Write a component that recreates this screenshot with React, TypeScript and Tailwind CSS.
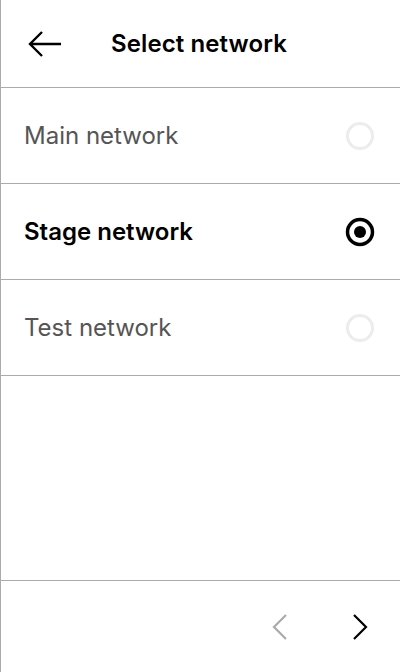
import React from "react";

const font = { fontFamily: "Inter, 'Noto Sans', sans-serif" };

function Radio({ selected }: { selected: boolean }) {
  return (
    <svg width="30" height="30" viewBox="0 0 30 30">
      {selected ? (
        <>
          <circle cx="15" cy="15" r="12.5" fill="none" stroke="#000" strokeWidth="3.5" />
          <circle cx="15" cy="15" r="6" fill="#000" />
        </>
      ) : (
        <circle cx="15" cy="15" r="12.5" fill="none" stroke="#ececec" strokeWidth="3" />
      )}
    </svg>
  );
}

const items = [
  { name: "Main network", selected: false },
  { name: "Stage network", selected: true },
  { name: "Test network", selected: false },
];

export default function App() {
  return (
    <div
      className="w-[400px] h-[672px] bg-white border-l border-[#ababab] flex flex-col overflow-hidden"
      style={font}
    >
      <div className="h-[88px] shrink-0 border-b border-[#ababab] flex items-center pl-[27px]">
        <svg width="34" height="28" viewBox="0 0 34 28" className="shrink-0">
          <path d="M2 14 H33 M14 2 L2 14 L14 26" fill="none" stroke="#000" strokeWidth="2.4" />
        </svg>
        <span className="ml-[49px] text-[24px] font-semibold text-black leading-none tracking-[0.1px]">
          Select network
        </span>
      </div>
      {items.map((it) => (
        <div
          key={it.name}
          className="h-[96px] shrink-0 border-b border-[#ababab] flex items-center justify-between pl-[23px] pr-[25px]"
        >
          <span
            className={
              it.selected
                ? "text-[24px] font-semibold text-black"
                : "text-[24px] font-normal text-[#555555]"
            }
          >
            {it.name}
          </span>
          <Radio selected={it.selected} />
        </div>
      ))}
      <div className="flex-1" />
      <div className="h-[92px] shrink-0 border-t border-[#ababab] flex items-center justify-end gap-[60px] pr-[30px]">
        <svg width="20" height="28" viewBox="0 0 20 28">
          <path d="M16 2 L4 14 L16 26" fill="none" stroke="#aaaaaa" strokeWidth="2.2" />
        </svg>
        <svg width="20" height="28" viewBox="0 0 20 28">
          <path d="M4 2 L16 14 L4 26" fill="none" stroke="#000" strokeWidth="2.2" />
        </svg>
      </div>
    </div>
  );
}
